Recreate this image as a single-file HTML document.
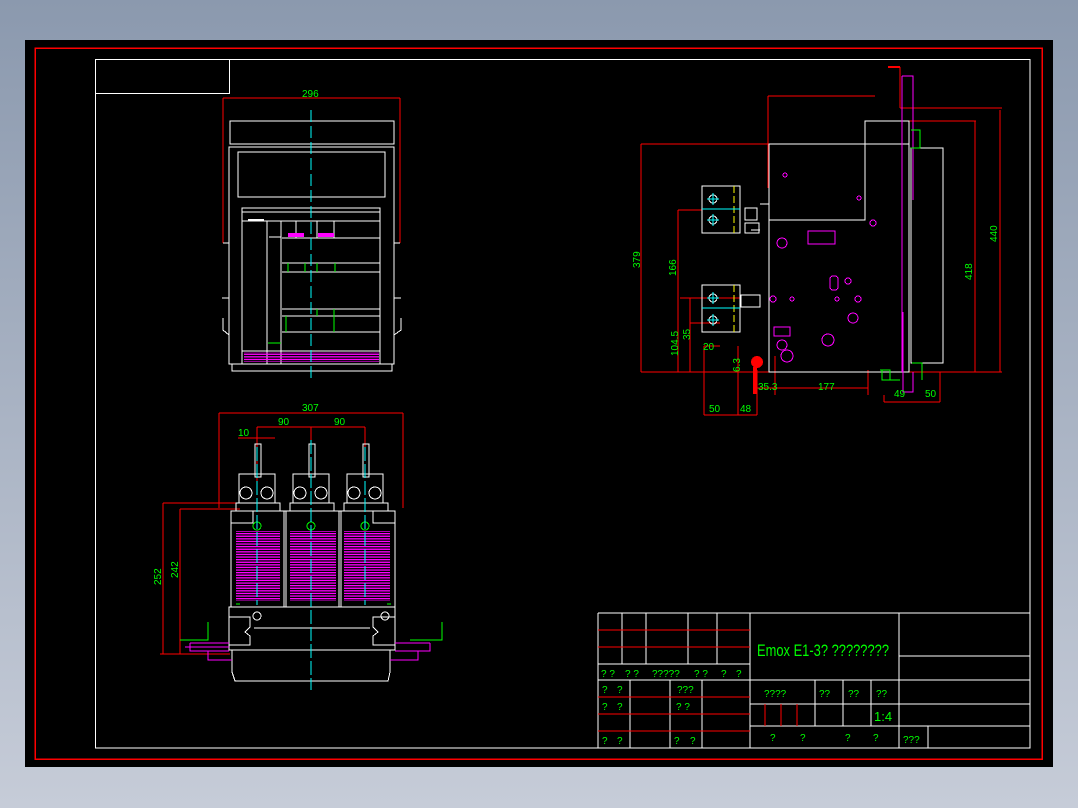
<!DOCTYPE html>
<html><head><meta charset="utf-8"><style>
html,body{margin:0;padding:0;width:1078px;height:808px;overflow:hidden;background:linear-gradient(#8b99ae,#c6ccd8);}
svg{display:block}
text{font-family:"Liberation Sans",sans-serif;fill:#00ff00;}
</style></head><body>
<svg width="1078" height="808" viewBox="0 0 1078 808" xmlns="http://www.w3.org/2000/svg" shape-rendering="crispEdges">
<defs>
<pattern id="grid" width="4" height="2.6" patternUnits="userSpaceOnUse"><rect x="0" y="0" width="4" height="1.2" fill="#ff00ff"/></pattern>
</defs>
<rect x="25" y="40" width="1028" height="727" fill="#000"/>
<rect x="35" y="48" width="1007" height="711" fill="none" stroke="#f00" stroke-width="1.5"/>
<rect x="95.5" y="59.5" width="934.5" height="688.5" fill="none" stroke="#fff" stroke-width="1"/>
<polyline points="95.5,93.5 229.5,93.5 229.5,59.5" fill="none" stroke="#fff"/>

<!-- FRONT VIEW -->
<g fill="none" stroke="#fff" stroke-width="1">
<path d="M223 98H400M223 98V243M400 98V243" stroke="#f00"/>
<rect x="230" y="121" width="164" height="23"/>
<rect x="229" y="147" width="165" height="217"/>
<rect x="232" y="364" width="160" height="7"/>
<rect x="238" y="152" width="147" height="45"/>
<rect x="242" y="208" width="138" height="156"/>
<path d="M242 212H380M242 221H380M267 221V364M281 221V364M269 237H281M282 238H380M282 263H380M282 272H380M282 309H380M282 316H380M282 332H380M242 351H380M296 221V238M317 221V238M334 221V238"/>
<path d="M223 243L229 243M394 243L400 243M222 298H229M394 298H401M223 318V330L229 335M401 318V330L394 335"/>
</g>
<path d="M248 220H264" stroke="#fff" stroke-width="2"/>
<rect x="288" y="233" width="16" height="4" fill="#f0f"/><rect x="318" y="233" width="16" height="4" fill="#f0f"/>
<rect x="244" y="352" width="135" height="10" fill="url(#grid)"/>
<path d="M288 263V272M305 263V272M317 263V272M335 263V272M317 309V316M334 309V332M286 316V332M268 343H281" stroke="#0f0" fill="none"/>
<path d="M311 110V380" stroke="#0ff" stroke-dasharray="12,4" />
<text x="302" y="97" font-size="10">296</text>

<!-- BOTTOM VIEW -->
<g fill="none" stroke="#f00" stroke-width="1">
<path d="M219 413H403M219 413V508M403 413V508M257 427H365M257 427V485M311 427V447M365 427V447M238 438H275"/>
<path d="M163 503V654M180 509V654M163 503H240M180 509H240M160 654H230"/>
</g>
<g fill="none" stroke="#fff" stroke-width="1">
<rect x="255" y="444" width="6" height="33"/><rect x="309" y="444" width="6" height="33"/><rect x="363" y="444" width="6" height="33"/>
<rect x="239" y="474" width="36" height="29"/><rect x="293" y="474" width="36" height="29"/><rect x="347" y="474" width="36" height="29"/>
<rect x="236" y="503" width="44" height="8"/><rect x="290" y="503" width="44" height="8"/><rect x="344" y="503" width="44" height="8"/>
<rect x="231" y="511" width="164" height="96"/>
<path d="M284 511V607M286 511V607M339 511V607M341 511V607M231 523H253V511M395 523H373V511"/>
<rect x="229" y="607" width="166" height="43"/>
<path d="M254 628H370M229 617H250V627L245 632L250 636V645H229M395 617H373V627L378 632L373 636V645H395"/>
<path d="M232 650V672L235 681H388L390 672V650"/>
<circle cx="246" cy="493" r="6"/><circle cx="267" cy="493" r="6"/><circle cx="300" cy="493" r="6"/><circle cx="321" cy="493" r="6"/><circle cx="354" cy="493" r="6"/><circle cx="375" cy="493" r="6"/>
<circle cx="257" cy="616" r="4"/><circle cx="385" cy="616" r="4"/>
</g>
<rect x="236" y="531" width="44" height="70" fill="url(#grid)"/>
<rect x="290" y="531" width="46" height="70" fill="url(#grid)"/>
<rect x="344" y="531" width="46" height="70" fill="url(#grid)"/>
<g fill="none" stroke="#0f0">
<circle cx="257" cy="526" r="4"/><circle cx="311" cy="526" r="4"/><circle cx="365" cy="526" r="4"/>
<path d="M180 640H208V622M410 640H442V622M236 604h4M387 604h4"/>
</g>
<g fill="none" stroke="#f0f">
<path d="M190 643H229M395 643H430M190 643V651H229M395 651H430V643M208 651V660H232M390 660H418V651M185 647H229"/>
</g>
<path d="M311 440V690M257 447V605M365 447V605" stroke="#0ff" stroke-dasharray="14,3"/>
<text x="302" y="411" font-size="10">307</text>
<text x="278" y="425" font-size="10">90</text><text x="334" y="425" font-size="10">90</text>
<text x="238" y="436" font-size="10">10</text>
<text x="0" y="0" font-size="10" transform="translate(161,585) rotate(-90)">252</text>
<text x="0" y="0" font-size="10" transform="translate(178,578) rotate(-90)">242</text>

<!-- SIDE VIEW -->
<g fill="none" stroke="#f00" stroke-width="1.2">
<path d="M641 372H1002M641 144H768M641 144V372M768 96V188M768 96H875M900 67V108M900 108H1002M902 121H976M975 121V372M1000 110V372"/>
<path d="M678 210V372M678 210H702M690 298V372M680 298H740M690 323H720M704 346H720M704 346V415M738 346V415M704 415H757M757 370V415M757 388H868M775 356V395M868 370V395M884 395V402M884 402H940M940 372V402"/>
<path d="M888 67H900" stroke-width="2"/>
</g>
<circle cx="757" cy="362" r="6" fill="#f00"/><rect x="753" y="367" width="4" height="27" fill="#f00"/>
<g fill="none" stroke="#fff">
<rect x="769" y="144" width="140" height="228"/>
<rect x="865" y="121" width="44" height="23"/>
<rect x="911" y="148" width="32" height="215"/>
<path d="M769 220H865V144M760 204H769V372M751 230H760"/>
<rect x="702" y="186" width="38" height="47"/><rect x="702" y="285" width="38" height="47"/>
<rect x="745" y="208" width="12" height="12"/><rect x="745" y="223" width="14" height="10"/>
<rect x="741" y="295" width="19" height="12"/>
<circle cx="713" cy="199" r="4"/><circle cx="713" cy="220" r="4"/><circle cx="713" cy="298" r="4"/><circle cx="713" cy="320" r="4"/>
</g>
<path d="M707 199h12M713 193v12M707 220h12M713 214v12M707 298h12M713 292v12M707 320h12M713 314v12" stroke="#0ff"/>
<path d="M734 186V233M734 285V333" stroke="#ff0" stroke-dasharray="7,3"/>
<path d="M702 209H740M702 308H740" stroke="#0ff"/>
<g fill="none" stroke="#f0f">
<rect x="808" y="231" width="27" height="13"/><rect x="774" y="327" width="16" height="9"/>
<circle cx="782" cy="243" r="5"/><circle cx="853" cy="318" r="5"/><circle cx="782" cy="345" r="5"/>
<circle cx="828" cy="340" r="6"/><circle cx="787" cy="356" r="6"/>
<circle cx="785" cy="175" r="2"/><circle cx="859" cy="198" r="2"/><circle cx="873" cy="223" r="3"/>
<rect x="830" y="276" width="8" height="14" rx="3"/><circle cx="848" cy="281" r="3"/><circle cx="792" cy="299" r="2"/><circle cx="837" cy="299" r="2"/><circle cx="858" cy="299" r="3"/><circle cx="773" cy="299" r="3"/>
<path d="M902 76H913V200M902 76V372M903 312V392H913V372"/>
</g>
<g fill="none" stroke="#0f0">
<path d="M911 130H920V148H911M882 370V380H900M880 370H890V380M912 363H922V380"/>
</g>
<g font-size="10">
<text transform="translate(640,268) rotate(-90)">379</text>
<text transform="translate(676,276) rotate(-90)">166</text>
<text transform="translate(678,356) rotate(-90)">104.5</text>
<text transform="translate(690,340) rotate(-90)">35</text>
<text x="703" y="350">20</text>
<text transform="translate(740,372) rotate(-90)">6.3</text>
<text x="758" y="390">35.3</text>
<text x="818" y="390">177</text>
<text x="894" y="397">49</text>
<text x="925" y="397">50</text>
<text x="709" y="412">50</text>
<text x="740" y="412">48</text>
<text transform="translate(997,242) rotate(-90)">440</text>
<text transform="translate(972,280) rotate(-90)">418</text>
</g>

<!-- TITLE BLOCK -->
<g fill="none" stroke="#fff">
<path d="M598 613H1030M598 613V748H1030M750 613V748M598 664H750M598 680H1030M622 613V664M646 613V664M688 613V664M717 613V664M630 680V748M670 680V748M702 680V748M750 704H1030M750 726H1030M815 680V726M843 680V726M871 680V726M899 613V748M928 726V748M899 656H1030"/>
</g>
<g stroke="#f00"><path d="M598 630H750M598 647H750M598 697H750M598 714H750M598 731H750M765 704V726M781 704V726M797 704V726"/></g>
<text x="757" y="656" font-size="17" textLength="132" lengthAdjust="spacingAndGlyphs">Emox E1-3? ????????</text>
<g font-size="10">
<text x="601" y="677">? ?</text><text x="625" y="677">? ?</text><text x="652" y="677">?????</text><text x="694" y="677">? ?</text><text x="721" y="677">?</text><text x="736" y="677">?</text>
<text x="602" y="693">?</text><text x="617" y="693">?</text><text x="677" y="693">???</text>
<text x="602" y="710">?</text><text x="617" y="710">?</text><text x="676" y="710">? ?</text>
<text x="602" y="744">?</text><text x="617" y="744">?</text><text x="674" y="744">?</text><text x="690" y="744">?</text>
<text x="764" y="697">????</text><text x="819" y="697">??</text><text x="848" y="697">??</text><text x="876" y="697">??</text>
<text x="770" y="741">?</text><text x="800" y="741">?</text><text x="845" y="741">?</text><text x="873" y="741">?</text>
<text x="903" y="743">???</text>
</g>
<text x="874" y="721" font-size="13">1:4</text>
</svg>
</body></html>
